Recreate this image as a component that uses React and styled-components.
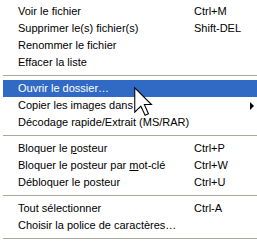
import React from "react";
import styled, { createGlobalStyle } from "styled-components";

const Global = createGlobalStyle`
  html, body {
    margin: 0;
    padding: 0;
    background: #ffffff;
    overflow: hidden;
  }
  body {
    font-family: Tahoma, "Liberation Sans", "DejaVu Sans", sans-serif;
    font-size: 11px;
  }
`;

const Menu = styled.div`
  position: relative;
  width: 262px;
  padding: 3px 0 0 3px;
  background: #ffffff;
  color: #000000;
  display: flex;
  flex-direction: column;
`;

const Item = styled.div`
  height: 17px;
  display: grid;
  grid-template-columns: 176px 1fr 16px;
  align-items: center;
  padding-left: 15px;
  line-height: 17px;
  white-space: nowrap;
  background: ${(p) => (p.$active ? "#316ac5" : "transparent")};
  color: ${(p) => (p.$active ? "#ffffff" : "#000000")};
`;

const Label = styled.span`
  overflow: visible;
`;

const Shortcut = styled.span``;

const Key = styled.span`
  text-decoration: underline;
`;

const Arrow = styled.span`
  width: 0;
  height: 0;
  margin-left: 1px;
  border-top: 4px solid transparent;
  border-bottom: 4px solid transparent;
  border-left: 4px solid ${(p) => (p.$active ? "#ffffff" : "#000000")};
  justify-self: start;
`;

const Separator = styled.div`
  height: 9px;
  display: flex;
  align-items: flex-start;
  &::before {
    content: "";
    display: block;
    margin-top: 4px;
    height: 1px;
    width: 100%;
    background: #aca899;
  }
`;

const Cursor = styled.svg`
  position: absolute;
  left: 134px;
  top: 87px;
  width: 19px;
  height: 29px;
  overflow: visible;
  pointer-events: none;
`;

export default function App() {
  return (
    <>
      <Global />
      <Menu>
        <Item>
          <Label>Voir le fichier</Label>
          <Shortcut>Ctrl+M</Shortcut>
        </Item>
        <Item>
          <Label>Supprimer le(s) fichier(s)</Label>
          <Shortcut>Shift-DEL</Shortcut>
        </Item>
        <Item>
          <Label>Renommer le fichier</Label>
        </Item>
        <Item>
          <Label>Effacer la liste</Label>
        </Item>
        <Separator />
        <Item $active>
          <Label>Ouvrir le dossier…</Label>
        </Item>
        <Item>
          <Label>Copier les images dans…</Label>
          <span />
          <Arrow />
        </Item>
        <Item>
          <Label>Décodage rapide/Extrait (MS/RAR)</Label>
        </Item>
        <Separator />
        <Item>
          <Label>
            Bloquer le <Key>p</Key>osteur
          </Label>
          <Shortcut>Ctrl+P</Shortcut>
        </Item>
        <Item>
          <Label>
            Bloquer le posteur par <Key>m</Key>ot-clé
          </Label>
          <Shortcut>Ctrl+W</Shortcut>
        </Item>
        <Item>
          <Label>Débloquer le posteur</Label>
          <Shortcut>Ctrl+U</Shortcut>
        </Item>
        <Separator />
        <Item>
          <Label>Tout sélectionner</Label>
          <Shortcut>Ctrl-A</Shortcut>
        </Item>
        <Item>
          <Label>Choisir la police de caractères…</Label>
        </Item>
        <Separator />
        <Cursor viewBox="0 0 12.5 19">
          <path
            d="M0.5 0.5 L0.5 16.5 L4.5 12.5 L7.3 18.5 L9.5 17.5 L6.8 11.5 L11.5 11.5 Z"
            fill="#ffffff"
            stroke="#000000"
            strokeWidth="0.7"
            strokeLinejoin="miter"
          />
        </Cursor>
      </Menu>
    </>
  );
}
